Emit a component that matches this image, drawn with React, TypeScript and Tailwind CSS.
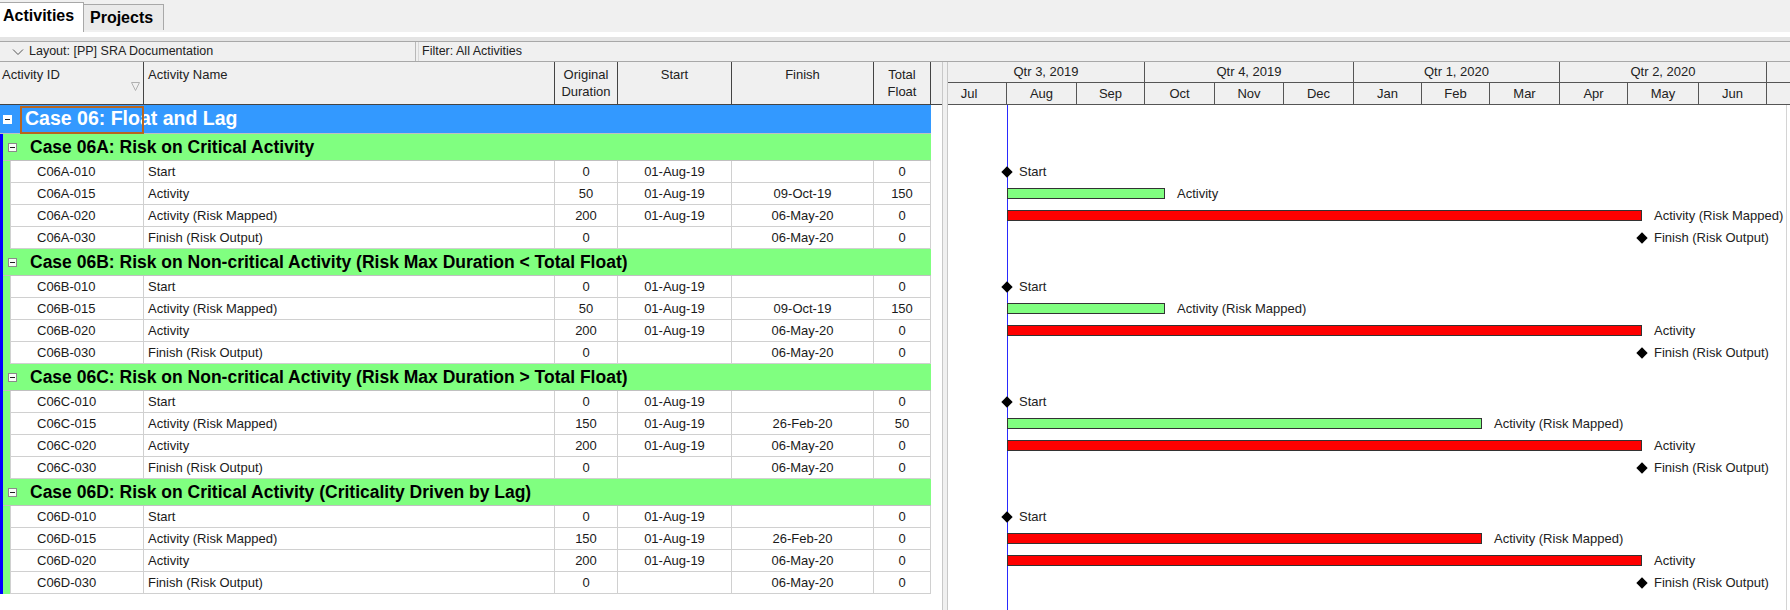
import React from 'react';

type Row = [string, string, string, string, string, string];
type Mark =
  | { kind: 'ms'; x: number; label: string }
  | { kind: 'bar'; to: number; color: 'green' | 'red'; label: string };

const DD = 59; // data date offset inside the gantt (01-Aug-19)
const OCT9 = 217;
const FEB26 = 534;
const MAY6 = 694;

const groups: { title: string; rows: Row[]; marks: Mark[] }[] = [
  {
    title: 'Case 06A: Risk on Critical Activity',
    rows: [
      ['C06A-010', 'Start', '0', '01-Aug-19', '', '0'],
      ['C06A-015', 'Activity', '50', '01-Aug-19', '09-Oct-19', '150'],
      ['C06A-020', 'Activity (Risk Mapped)', '200', '01-Aug-19', '06-May-20', '0'],
      ['C06A-030', 'Finish (Risk Output)', '0', '', '06-May-20', '0'],
    ],
    marks: [
      { kind: 'ms', x: DD, label: 'Start' },
      { kind: 'bar', to: OCT9, color: 'green', label: 'Activity' },
      { kind: 'bar', to: MAY6, color: 'red', label: 'Activity (Risk Mapped)' },
      { kind: 'ms', x: MAY6, label: 'Finish (Risk Output)' },
    ],
  },
  {
    title: 'Case 06B: Risk on Non-critical Activity (Risk Max Duration < Total Float)',
    rows: [
      ['C06B-010', 'Start', '0', '01-Aug-19', '', '0'],
      ['C06B-015', 'Activity (Risk Mapped)', '50', '01-Aug-19', '09-Oct-19', '150'],
      ['C06B-020', 'Activity', '200', '01-Aug-19', '06-May-20', '0'],
      ['C06B-030', 'Finish (Risk Output)', '0', '', '06-May-20', '0'],
    ],
    marks: [
      { kind: 'ms', x: DD, label: 'Start' },
      { kind: 'bar', to: OCT9, color: 'green', label: 'Activity (Risk Mapped)' },
      { kind: 'bar', to: MAY6, color: 'red', label: 'Activity' },
      { kind: 'ms', x: MAY6, label: 'Finish (Risk Output)' },
    ],
  },
  {
    title: 'Case 06C: Risk on Non-critical Activity (Risk Max Duration > Total Float)',
    rows: [
      ['C06C-010', 'Start', '0', '01-Aug-19', '', '0'],
      ['C06C-015', 'Activity (Risk Mapped)', '150', '01-Aug-19', '26-Feb-20', '50'],
      ['C06C-020', 'Activity', '200', '01-Aug-19', '06-May-20', '0'],
      ['C06C-030', 'Finish (Risk Output)', '0', '', '06-May-20', '0'],
    ],
    marks: [
      { kind: 'ms', x: DD, label: 'Start' },
      { kind: 'bar', to: FEB26, color: 'green', label: 'Activity (Risk Mapped)' },
      { kind: 'bar', to: MAY6, color: 'red', label: 'Activity' },
      { kind: 'ms', x: MAY6, label: 'Finish (Risk Output)' },
    ],
  },
  {
    title: 'Case 06D: Risk on Critical Activity (Criticality Driven by Lag)',
    rows: [
      ['C06D-010', 'Start', '0', '01-Aug-19', '', '0'],
      ['C06D-015', 'Activity (Risk Mapped)', '150', '01-Aug-19', '26-Feb-20', '0'],
      ['C06D-020', 'Activity', '200', '01-Aug-19', '06-May-20', '0'],
      ['C06D-030', 'Finish (Risk Output)', '0', '', '06-May-20', '0'],
    ],
    marks: [
      { kind: 'ms', x: DD, label: 'Start' },
      { kind: 'bar', to: FEB26, color: 'red', label: 'Activity (Risk Mapped)' },
      { kind: 'bar', to: MAY6, color: 'red', label: 'Activity' },
      { kind: 'ms', x: MAY6, label: 'Finish (Risk Output)' },
    ],
  },
];

const quarters = [
  { label: 'Qtr 3, 2019', w: 197 },
  { label: 'Qtr 4, 2019', w: 209 },
  { label: 'Qtr 1, 2020', w: 206 },
  { label: 'Qtr 2, 2020', w: 207 },
];

const months = [
  ['Jul', 59], ['Aug', 70], ['Sep', 68], ['Oct', 70], ['Nov', 69], ['Dec', 70],
  ['Jan', 68], ['Feb', 68], ['Mar', 70], ['Apr', 68], ['May', 71], ['Jun', 68],
] as const;

function Collapse({ light }: { light?: boolean }) {
  return (
    <div
      className={`w-[9px] h-[9px] flex items-center justify-center shrink-0 ${
        light ? 'bg-white' : 'bg-[#f8fff8] border border-[#8a8a8a]'
      }`}
    >
      <div className="w-[5px] h-px bg-[#222]" />
    </div>
  );
}

function GanttRow({ mark }: { mark: Mark }) {
  if (mark.kind === 'ms') {
    return (
      <div className="relative h-[22px]">
        <div className="absolute top-[7px] w-[8px] h-[8px] bg-black rotate-45" style={{ left: mark.x - 4 }} />
        <div className="absolute top-0 h-[22px] flex items-center text-[13px] text-[#222] whitespace-nowrap" style={{ left: mark.x + 12 }}>
          {mark.label}
        </div>
      </div>
    );
  }
  return (
    <div className="relative h-[22px]">
      <div
        className={`absolute top-[5px] h-[11px] border border-[#333] ${mark.color === 'green' ? 'bg-[#80ff80]' : 'bg-[#ff0000]'}`}
        style={{ left: DD, width: mark.to - DD }}
      />
      <div className="absolute top-0 h-[22px] flex items-center text-[13px] text-[#222] whitespace-nowrap" style={{ left: mark.to + 12 }}>
        {mark.label}
      </div>
    </div>
  );
}

export default function App() {
  return (
    <div className="w-[1790px] h-[610px] overflow-hidden bg-white font-['Liberation_Sans',Arial,sans-serif] text-[#1a1a1a]">
      {/* tabs */}
      <div className="h-[32px] bg-[#f0f0f0] flex items-end">
        <div className="h-[30px] w-[84px] bg-white border-t border-r border-[#a8a8a8] flex items-center pl-[3px] pb-[3px] text-[16px] font-bold text-black">
          Activities
        </div>
        <div className="h-[26px] w-[80px] mb-[2px] bg-[#eaeaea] border-t border-r border-[#a8a8a8] flex items-center pl-[6px] text-[16px] font-bold text-black">
          Projects
        </div>
      </div>
      <div className="h-[5px] bg-white" />
      <div className="h-[4px] bg-[#e4e4e4]" />

      {/* layout / filter bar */}
      <div className="h-[21px] bg-[#f0f0f0] border-t border-b border-[#a8a8a8] flex text-[12.5px] text-[#222]">
        <div className="w-[414px] ml-[2px] border-r border-[#b8b8b8] flex items-center">
          <svg width="12" height="8" viewBox="0 0 12 8" className="ml-[10px] mr-[5px]">
            <polyline points="1,1.5 6,6.5 11,1.5" fill="none" stroke="#555" strokeWidth="1" />
          </svg>
          Layout: [PP] SRA Documentation
        </div>
        <div className="ml-[2px] pl-[3px] border-l border-[#d8d8d8] flex items-center flex-1">Filter: All Activities</div>
      </div>

      <div className="flex h-[548px]">
        {/* activity table */}
        <div className="w-[942px] shrink-0 flex flex-col">
          <div className="h-[43px] shrink-0 bg-[#f0f0f0] border-b border-[#444] flex text-[13px] leading-[17px] text-[#222]">
            <div className="w-[144px] border-r border-[#444] relative pl-[2px] pt-[4px]">
              Activity ID
              <svg width="9" height="9" viewBox="0 0 9 9" className="absolute left-[131px] top-[20px]">
                <polygon points="0.5,0.5 8.5,0.5 4.5,8.5" fill="none" stroke="#b0b0b0" strokeWidth="1" />
              </svg>
            </div>
            <div className="w-[411px] border-r border-[#444] pl-[4px] pt-[4px]">Activity Name</div>
            <div className="w-[63px] border-r border-[#444] text-center pt-[4px]">Original<br />Duration</div>
            <div className="w-[114px] border-r border-[#444] text-center pt-[4px]">Start</div>
            <div className="w-[142px] border-r border-[#444] text-center pt-[4px]">Finish</div>
            <div className="w-[57px] border-r border-[#444] text-center pt-[4px]">Total<br />Float</div>
            <div className="flex-1" />
          </div>

          <div className="w-[931px]">
            <div className="relative h-[29px] bg-[#3399ff] border-b border-[#c0c0c0] flex items-center">
              <div className="ml-[3px]"><Collapse light /></div>
              <div className="ml-[13px] text-[19.5px] font-bold text-white whitespace-nowrap">Case 06: Float and Lag</div>
              <div className="absolute left-[20px] top-px w-[124px] h-[28px] border-2 border-[#b8651f]" />
            </div>

            {groups.map((g) => (
              <div key={g.title} className="flex">
                <div className="w-[3px] bg-[#0000ff] shrink-0" />
                <div className="flex-1">
                  <div className="h-[27px] bg-[#80ff80] border-b border-[#c0c0c0] flex items-center">
                    <div className="ml-[5px]"><Collapse /></div>
                    <div className="ml-[13px] text-[17.5px] font-bold text-black whitespace-nowrap">{g.title}</div>
                  </div>
                  {g.rows.map((r) => (
                    <div key={r[0]} className="h-[22px] flex text-[13px] text-[#1a1a1a]">
                      <div className="w-[7px] bg-[#80ff80] shrink-0" />
                      <div className="flex flex-1 border-b border-[#d0d0d0] bg-white">
                        <div className="w-[134px] border-l border-r border-[#d0d0d0] pl-[26px] flex items-center">{r[0]}</div>
                        <div className="w-[411px] border-r border-[#d0d0d0] pl-[4px] flex items-center">{r[1]}</div>
                        <div className="w-[63px] border-r border-[#d0d0d0] flex items-center justify-center">{r[2]}</div>
                        <div className="w-[114px] border-r border-[#d0d0d0] flex items-center justify-center">{r[3]}</div>
                        <div className="w-[142px] border-r border-[#d0d0d0] flex items-center justify-center">{r[4]}</div>
                        <div className="flex-1 border-r border-[#d0d0d0] flex items-center justify-center">{r[5]}</div>
                      </div>
                    </div>
                  ))}
                </div>
              </div>
            ))}
          </div>
        </div>

        {/* splitter */}
        <div className="w-[6px] shrink-0 border-l border-[#c8c8c8] border-r border-[#8c8c8c] bg-[#f0f0f0]" />

        {/* gantt */}
        <div className="flex-1 flex flex-col min-w-0">
          <div className="h-[43px] shrink-0 bg-[#f0f0f0] border-b border-[#555] flex flex-col text-[13px] text-[#222] font-['Liberation_Sans_Narrow','Liberation_Sans',sans-serif]">
            <div className="h-[21px] flex border-b border-[#555]">
              {quarters.map((q) => (
                <div key={q.label} className="border-r border-[#555] flex items-center justify-center shrink-0" style={{ width: q.w }}>
                  {q.label}
                </div>
              ))}
              <div className="flex-1" />
            </div>
            <div className="flex-1 flex">
              {months.map(([m, w]) => (
                <div
                  key={m}
                  className={`border-r border-[#555] flex items-center justify-center shrink-0 ${m === 'Jul' ? 'pr-[16px]' : ''}`}
                  style={{ width: w }}
                >
                  {m}
                </div>
              ))}
              <div className="flex-1" />
            </div>
          </div>

          <div className="relative flex-1">
            <div className="absolute left-[59px] top-0 bottom-0 w-px bg-[#2a2aff]" />
            <div className="absolute left-[838px] top-0 bottom-0 w-px bg-[#d4d4d4]" />
            <div className="h-[29px]" />
            {groups.map((g) => (
              <div key={g.title}>
                <div className="h-[27px]" />
                {g.marks.map((m, i) => (
                  <GanttRow key={i} mark={m} />
                ))}
              </div>
            ))}
          </div>
        </div>
      </div>
    </div>
  );
}
